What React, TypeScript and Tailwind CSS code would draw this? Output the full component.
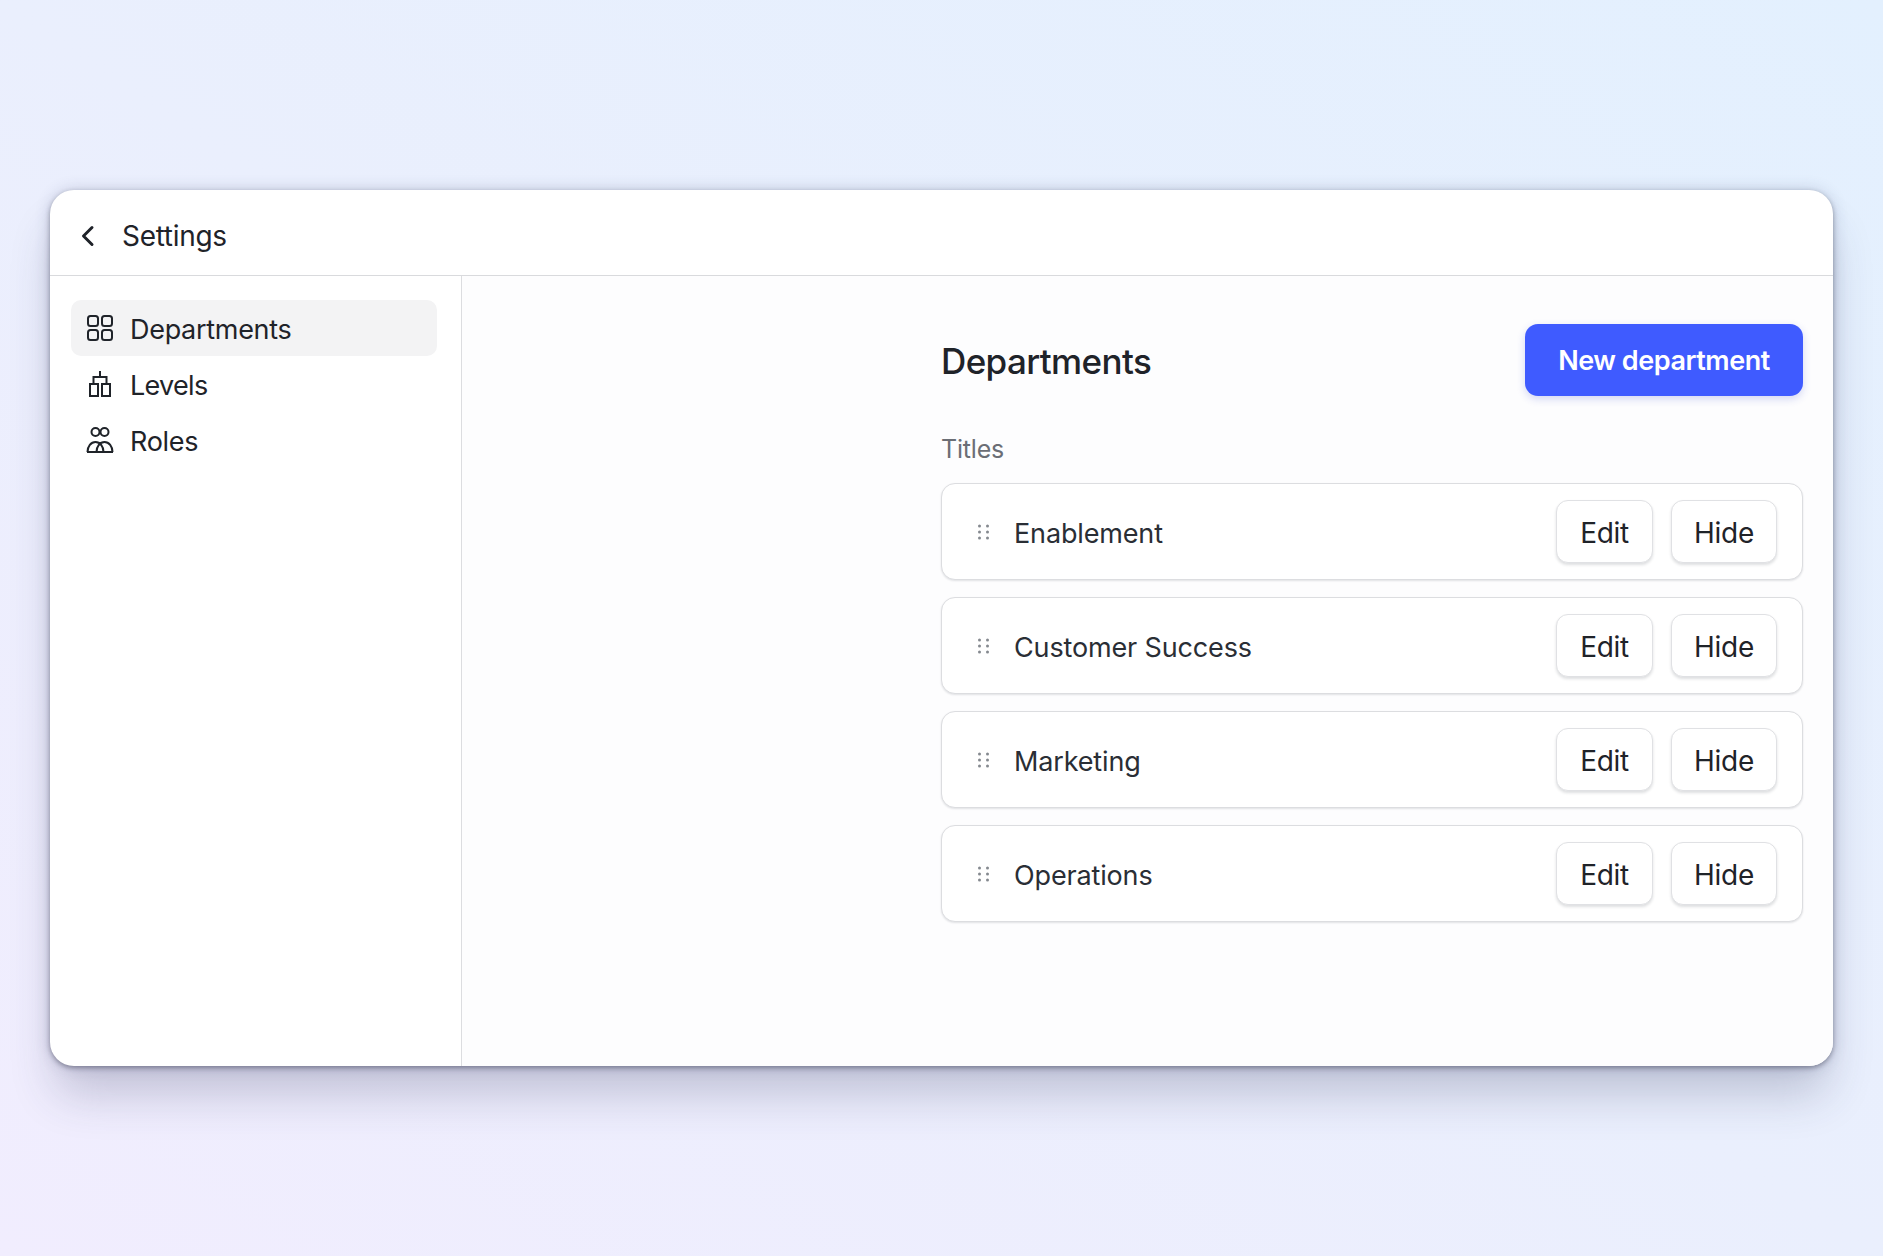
const font = "font-['Inter','Liberation_Sans',sans-serif]";

const GridIcon = () => (
  <svg width="28" height="28" viewBox="0 0 28 28" fill="none" stroke="#1f2329" strokeWidth="2">
    <rect x="2" y="2" width="10" height="10" rx="2.5" />
    <rect x="16" y="2" width="10" height="10" rx="2.5" />
    <rect x="2" y="16" width="10" height="10" rx="2.5" />
    <rect x="16" y="16" width="10" height="10" rx="2.5" />
  </svg>
);

const LevelsIcon = () => (
  <svg width="28" height="28" viewBox="0 0 28 28" fill="none" stroke="#1f2329" strokeWidth="2">
    <path d="M14 1v6M7.500 14V7h13v7" />
    <rect x="4" y="14" width="8" height="12" />
    <rect x="16" y="14" width="8" height="12" />
  </svg>
);

const RolesIcon = () => (
  <svg width="28" height="28" viewBox="0 0 28 28" fill="none" stroke="#1f2329" strokeWidth="2">
    <circle cx="9.500" cy="6" r="4" />
    <circle cx="18.500" cy="6" r="4" />
    <path d="M1.500 26c0-5.500 3.500-10 8-10s8 4.500 8 10M10.500 26c0-5.500 3.500-10 8-10s8 4.500 8 10M1 26h26" />
  </svg>
);

const Grip = () => (
  <svg width="11" height="16" viewBox="0 0 11 16" fill="#85898f">
    <circle cx="1.500" cy="2" r="1.500" />
    <circle cx="9.500" cy="2" r="1.500" />
    <circle cx="1.500" cy="8" r="1.500" />
    <circle cx="9.500" cy="8" r="1.500" />
    <circle cx="1.500" cy="14" r="1.500" />
    <circle cx="9.500" cy="14" r="1.500" />
  </svg>
);

const nav = [
  { label: "Departments", icon: <GridIcon />, active: true, tracking: "tracking-[-0.3px]" },
  { label: "Levels", icon: <LevelsIcon />, active: false, tracking: "tracking-[-0.7px]" },
  { label: "Roles", icon: <RolesIcon />, active: false, tracking: "tracking-[-0.3px]" },
];

const departments = ["Enablement", "Customer Success", "Marketing", "Operations"];

const SmallButton = ({ label, width }: { label: string; width: string }) => (
  <button
    className={`${width} h-[63px] rounded-[12px] border border-[#e0e1e4] bg-white pt-[2px] text-[28px] tracking-[-0.3px] text-[#1f2329] shadow-[0_2px_3px_rgba(20,25,40,0.14)]`}
  >
    {label}
  </button>
);

export default function App() {
  return (
    <div className={`${font} h-[1256px] w-full overflow-hidden bg-gradient-to-tr from-[#f1edfe] via-[#eaeffd] to-[#e3f0fe] pl-[50px] pt-[190px]`}>
      <div className="flex h-[876px] w-[1783px] flex-col rounded-[24px] bg-white shadow-[0_34px_46px_-6px_rgba(50,55,90,0.24),0_2px_5px_rgba(30,30,50,0.4),0_0_16px_rgba(50,60,100,0.2)]">
        <header className="flex h-[86px] shrink-0 items-center border-b border-[#d9dadd] pl-[28px] pt-[7px]">
          <svg width="20" height="24" viewBox="0 0 20 24" fill="none" stroke="#1f2329" strokeWidth="3" strokeLinecap="round" strokeLinejoin="round">
            <path d="M14 3.500 5.500 12l8.500 8.500" />
          </svg>
          <span className="ml-[24px] text-[28px] tracking-[-0.3px] text-[#1f2329]">Settings</span>
        </header>
        <div className="flex min-h-0 flex-1">
          <aside className="w-[412px] shrink-0 border-r border-[#dcdde0] pl-[21px] pr-[24px] pt-[24px]">
            {nav.map((item) => (
              <div
                key={item.label}
                className={`flex h-[56px] items-center gap-[16px] rounded-[10px] pl-[15px] text-[27px] text-[#1f2329] ${item.tracking} ${item.active ? "bg-[#f3f3f4]" : ""}`}
              >
                {item.icon}
                <span className="pt-[5px]">{item.label}</span>
              </div>
            ))}
          </aside>
          <main className="flex flex-1 justify-end rounded-br-[24px] bg-[#fdfdfe] pr-[30px] pt-[48px]">
            <div className="w-[862px]">
              <div className="flex h-[72px] items-center justify-between">
                <h1 className="pt-[2px] text-[35px] font-medium tracking-[-0.6px] text-[#1f2329]">Departments</h1>
                <button className="h-[72px] w-[278px] rounded-[13px] bg-[#3f5bff] pt-[2px] text-[27px] font-semibold tracking-[-0.45px] text-white shadow-[0_3px_8px_rgba(40,60,200,0.2)]">
                  New department
                </button>
              </div>
              <p className="mt-[37px] text-[25px] leading-[32px] tracking-[-0.2px] text-[#6b6e75]">Titles</p>
              <div className="mt-[18px] flex flex-col gap-[17px]">
                {departments.map((name) => (
                  <div
                    key={name}
                    className="flex h-[97px] items-center rounded-[14px] border border-[#dcdde0] bg-white pl-[36px] pr-[25px] shadow-[0_1px_2px_rgba(20,25,40,0.12)]"
                  >
                    <Grip />
                    <span className="ml-[25px] flex-1 pt-[5px] text-[27px] tracking-[-0.15px] text-[#2a2e35]">{name}</span>
                    <div className="flex gap-[18px]">
                      <SmallButton label="Edit" width="w-[97px]" />
                      <SmallButton label="Hide" width="w-[106px]" />
                    </div>
                  </div>
                ))}
              </div>
            </div>
          </main>
        </div>
      </div>
    </div>
  );
}
